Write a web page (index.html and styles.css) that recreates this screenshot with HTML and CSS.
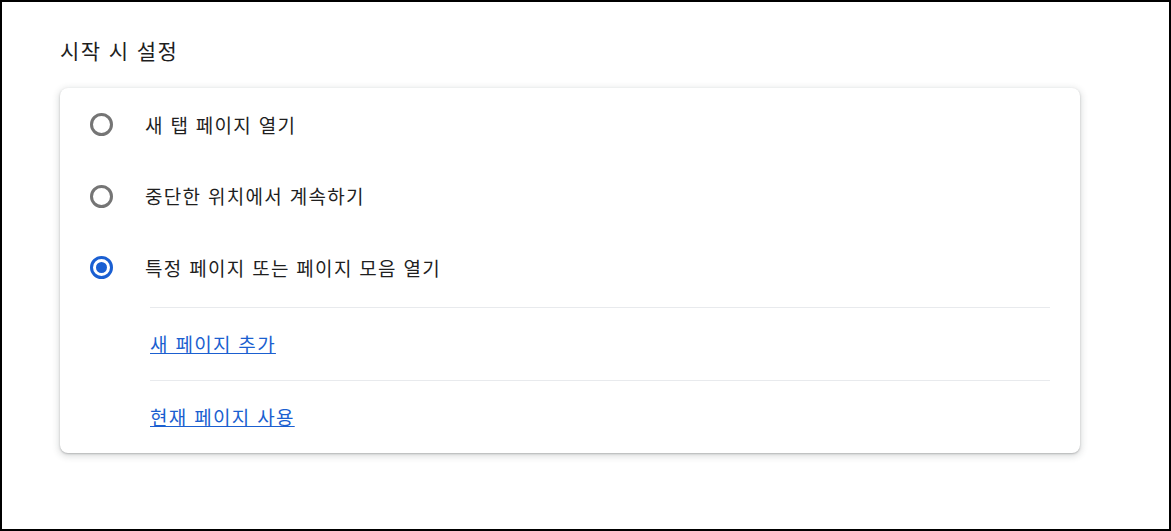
FILE: index.html
```html
<!DOCTYPE html>
<html lang="ko">
<head>
<meta charset="utf-8">
<link rel="stylesheet" href="styles.css">
</head>
<body>
<div class="page">
  <h2 class="section-title">시작 시 설정</h2>
  <div class="card">
    <div class="radio-group">
      <label class="radio-row">
        <span class="radio"></span>
        <span class="radio-label">새 탭 페이지 열기</span>
      </label>
      <label class="radio-row">
        <span class="radio"></span>
        <span class="radio-label">중단한 위치에서 계속하기</span>
      </label>
      <label class="radio-row">
        <span class="radio checked"></span>
        <span class="radio-label">특정 페이지 또는 페이지 모음 열기</span>
      </label>
    </div>
    <div class="link-list">
      <div class="link-row"><a class="link" href="#">새 페이지 추가</a></div>
      <div class="link-row"><a class="link" href="#">현재 페이지 사용</a></div>
    </div>
  </div>
</div>
</body>
</html>
```

FILE: styles.css
```css
html, body {
  margin: 0;
  padding: 0;
  height: 100%;
}
body {
  background: #fff;
  font-family: "Noto Sans CJK KR", "Noto Sans", sans-serif;
  color: #1f1f1f;
}
.page {
  box-sizing: border-box;
  height: 531px;
  border: 2px solid #000;
  padding: 33px 0 0 58px;
}
.section-title {
  margin: 0;
  font-size: 21px;
  font-weight: 400;
  letter-spacing: 1.4px;
  line-height: 30px;
  height: 30px;
}
.card {
  margin-top: 23px;
  width: 1020px;
  background: #fff;
  border-radius: 8px;
  box-shadow: 0 1px 2px 0 rgba(60, 64, 67, 0.3), 0 2px 6px 2px rgba(60, 64, 67, 0.15);
  padding-top: 1px;
}
.radio-group {
  display: flex;
  flex-direction: column;
  padding-left: 30px;
}
.radio-row {
  display: flex;
  align-items: center;
  gap: 32px;
  height: 71.5px;
  cursor: pointer;
}
.radio {
  box-sizing: border-box;
  width: 23px;
  height: 23px;
  border: 3px solid #757575;
  border-radius: 50%;
  display: flex;
  align-items: center;
  justify-content: center;
  flex: none;
}
.radio.checked {
  border-color: #1a5fd2;
}
.radio.checked::after {
  content: "";
  width: 11px;
  height: 11px;
  border-radius: 50%;
  background: #1a5fd2;
}
.radio-label {
  font-size: 19px;
  letter-spacing: 1.3px;
  line-height: 24px;
}
.link-list {
  margin: 3px 30px 0 90px;
}
.link-row {
  border-top: 1px solid #e8eaed;
  height: 72px;
  display: flex;
  align-items: center;
}
.link {
  color: #1b5fd0;
  font-size: 19px;
  letter-spacing: 1.3px;
  line-height: 24px;
  text-decoration: underline;
}
```
